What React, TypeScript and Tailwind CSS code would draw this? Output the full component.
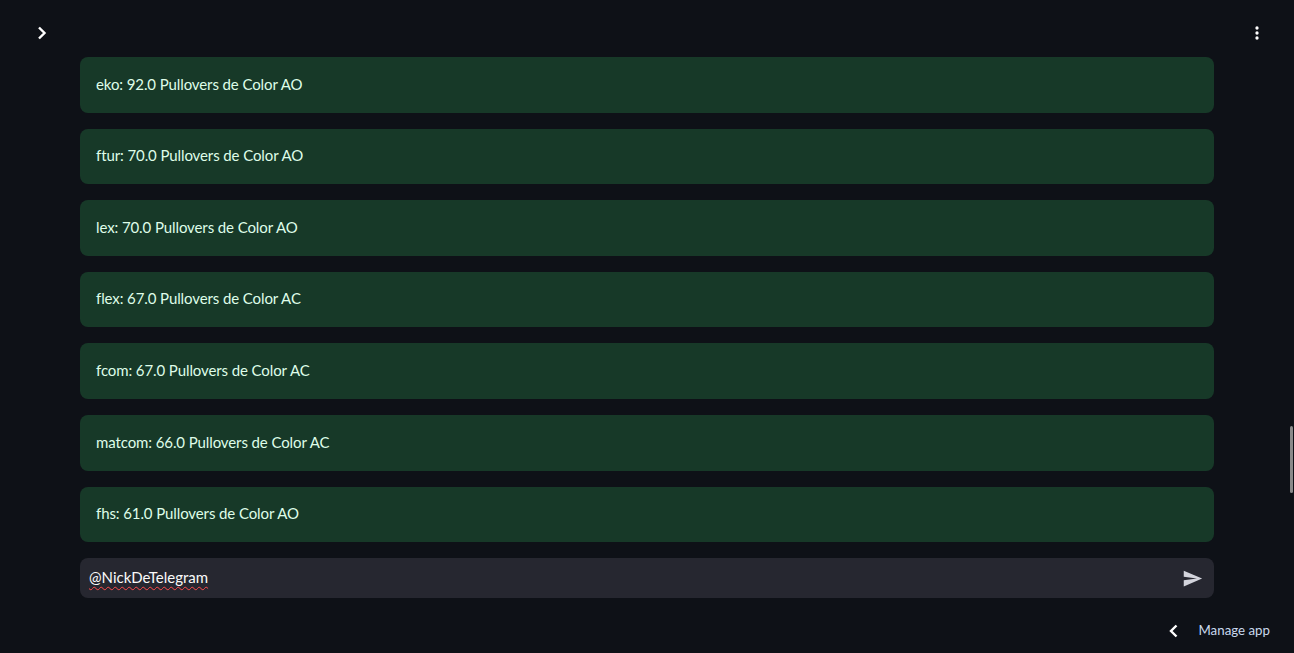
import { useState } from 'react'

const rows = [
  'eko: 92.0 Pullovers de Color AO',
  'ftur: 70.0 Pullovers de Color AO',
  'lex: 70.0 Pullovers de Color AO',
  'flex: 67.0 Pullovers de Color AC',
  'fcom: 67.0 Pullovers de Color AC',
  'matcom: 66.0 Pullovers de Color AC',
  'fhs: 61.0 Pullovers de Color AO',
]

const font = { fontFamily: '"Source Sans Pro", Lato, "Noto Sans", sans-serif' }

export default function App() {
  const [msg, setMsg] = useState('@NickDeTelegram')

  return (
    <div className="relative h-[653px] w-[1294px] overflow-hidden bg-[#0e1117] text-[#fafafa]" style={font}>
      {/* Header */}
      <div className="flex h-[57px] items-start justify-between pl-[36px] pr-[31px] pt-[26px]">
        <svg viewBox="0 0 12 14" className="h-[14px] w-[12px] text-white" fill="none" stroke="currentColor" strokeWidth="2.4">
          <polyline points="3,1.5 8.5,7 3,12.5" />
        </svg>
        <button className="flex h-5 w-5 translate-x-[4px] -translate-y-[3px] items-center justify-center text-white">
          <svg viewBox="0 0 24 24" className="h-5 w-5" fill="currentColor">
            <circle cx="12" cy="6" r="2" />
            <circle cx="12" cy="12" r="2" />
            <circle cx="12" cy="18" r="2" />
          </svg>
        </button>
      </div>

      {/* Messages */}
      <div className="mx-[80px] flex flex-col gap-4">
        {rows.map((r) => (
          <div
            key={r}
            className="flex h-[55.6px] items-center rounded-lg bg-[#173928] px-4 pb-[2px] text-[15px] tracking-[-0.1px] text-[#dffde9]"
          >
            {r}
          </div>
        ))}
      </div>

      {/* Chat input */}
      <div className="mx-[80px] mt-4 flex h-10 items-center rounded-lg bg-[#262730] pl-[9px] pr-[11px]">
        <input
          value={msg}
          onChange={(e) => setMsg(e.target.value)}
          spellCheck={false}
          className="h-[30px] flex-1 bg-transparent pb-[3px] text-[15px] leading-[30px] text-[#fafafa] underline decoration-[#ff4b4b] decoration-wavy decoration-1 underline-offset-[3px] outline-none"
          style={font}
        />
        <svg viewBox="0 0 24 24" className="h-[21px] w-[21px] text-[#d3d4dc]" fill="currentColor">
          <path d="M2.01 21L23 12 2.01 3 2 10l15 2-15 2z" />
        </svg>
      </div>

      {/* Manage app */}
      <div className="absolute bottom-[12px] right-[24px] flex items-center gap-[18px] text-[13.3px] text-[#c9d9ee]">
        <svg viewBox="0 0 12 14" className="h-[14px] w-[12px] text-white" fill="none" stroke="currentColor" strokeWidth="2.4">
          <polyline points="8.5,1.5 3,7 8.5,12.5" />
        </svg>
        <span>Manage app</span>
      </div>

      {/* Scrollbar */}
      <div className="absolute right-[1px] top-[426px] h-[67px] w-[3px] rounded-sm bg-[#8a8a8a]" />
    </div>
  )
}
